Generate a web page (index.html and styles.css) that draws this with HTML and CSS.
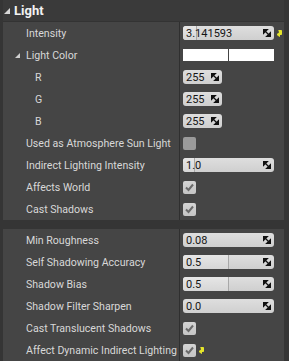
FILE: index.html
```html
<!DOCTYPE html>
<html>
<head>
<meta charset="utf-8">
<link rel="stylesheet" href="styles.css">
</head>
<body>
<div class="panel">
  <div class="header"><span class="htri"></span><span class="htitle">Light</span></div>
  <div class="section">
    <div class="row">
      <div class="label">Intensity</div>
      <div class="value">
        <div class="field wide"><div class="fill" style="width:13px"></div><span class="num">3.141593</span><svg class="spin" viewBox="0 0 8 8"><polygon points="0,0 5,0 0,5" /><polygon points="8,8 3,8 8,3" /><line x1="1" y1="1" x2="7" y2="7" /></svg></div>
        <svg class="reset" viewBox="0 0 6 8"><path d="M1.5 1.5 H4.5 V5.5 H2.5" /><polygon points="0,5.5 2.5,3.5 2.5,7.5" /></svg>
      </div>
    </div>
    <div class="row">
      <div class="label"><span class="stri"></span>Light Color</div>
      <div class="value"><div class="color"><span></span><span></span></div></div>
    </div>
    <div class="row">
      <div class="label sub">R</div>
      <div class="value"><div class="field small"><span class="num">255</span><svg class="spin" viewBox="0 0 8 8"><polygon points="0,0 5,0 0,5" /><polygon points="8,8 3,8 8,3" /><line x1="1" y1="1" x2="7" y2="7" /></svg></div></div>
    </div>
    <div class="row">
      <div class="label sub">G</div>
      <div class="value"><div class="field small"><span class="num">255</span><svg class="spin" viewBox="0 0 8 8"><polygon points="0,0 5,0 0,5" /><polygon points="8,8 3,8 8,3" /><line x1="1" y1="1" x2="7" y2="7" /></svg></div></div>
    </div>
    <div class="row">
      <div class="label sub">B</div>
      <div class="value"><div class="field small"><span class="num">255</span><svg class="spin" viewBox="0 0 8 8"><polygon points="0,0 5,0 0,5" /><polygon points="8,8 3,8 8,3" /><line x1="1" y1="1" x2="7" y2="7" /></svg></div></div>
    </div>
    <div class="row">
      <div class="label">Used as Atmosphere Sun Light</div>
      <div class="value"><div class="check off"></div></div>
    </div>
    <div class="row">
      <div class="label">Indirect Lighting Intensity</div>
      <div class="value"><div class="field wide"><div class="fill" style="width:11px"></div><span class="num">1.0</span><svg class="spin" viewBox="0 0 8 8"><polygon points="0,0 5,0 0,5" /><polygon points="8,8 3,8 8,3" /><line x1="1" y1="1" x2="7" y2="7" /></svg></div></div>
    </div>
    <div class="row">
      <div class="label">Affects World</div>
      <div class="value"><div class="check"><svg viewBox="0 0 13 13"><path d="M3 6.5 L5.5 9 L10 3.5" /></svg></div></div>
    </div>
    <div class="row">
      <div class="label">Cast Shadows</div>
      <div class="value"><div class="check"><svg viewBox="0 0 13 13"><path d="M3 6.5 L5.5 9 L10 3.5" /></svg></div></div>
    </div>
  </div>
  <div class="sep"></div>
  <div class="section">
    <div class="row">
      <div class="label">Min Roughness</div>
      <div class="value"><div class="field wide"><span class="num">0.08</span><svg class="spin" viewBox="0 0 8 8"><polygon points="0,0 5,0 0,5" /><polygon points="8,8 3,8 8,3" /><line x1="1" y1="1" x2="7" y2="7" /></svg></div></div>
    </div>
    <div class="row">
      <div class="label">Self Shadowing Accuracy</div>
      <div class="value"><div class="field wide"><div class="fill" style="width:45px"></div><span class="num">0.5</span><svg class="spin" viewBox="0 0 8 8"><polygon points="0,0 5,0 0,5" /><polygon points="8,8 3,8 8,3" /><line x1="1" y1="1" x2="7" y2="7" /></svg></div></div>
    </div>
    <div class="row">
      <div class="label">Shadow Bias</div>
      <div class="value"><div class="field wide"><div class="fill" style="width:45px"></div><span class="num">0.5</span><svg class="spin" viewBox="0 0 8 8"><polygon points="0,0 5,0 0,5" /><polygon points="8,8 3,8 8,3" /><line x1="1" y1="1" x2="7" y2="7" /></svg></div></div>
    </div>
    <div class="row">
      <div class="label">Shadow Filter Sharpen</div>
      <div class="value"><div class="field wide"><span class="num">0.0</span><svg class="spin" viewBox="0 0 8 8"><polygon points="0,0 5,0 0,5" /><polygon points="8,8 3,8 8,3" /><line x1="1" y1="1" x2="7" y2="7" /></svg></div></div>
    </div>
    <div class="row">
      <div class="label">Cast Translucent Shadows</div>
      <div class="value"><div class="check"><svg viewBox="0 0 13 13"><path d="M3 6.5 L5.5 9 L10 3.5" /></svg></div></div>
    </div>
    <div class="row">
      <div class="label">Affect Dynamic Indirect Lighting</div>
      <div class="value"><div class="check"><svg viewBox="0 0 13 13"><path d="M3 6.5 L5.5 9 L10 3.5" /></svg></div>
        <svg class="reset" viewBox="0 0 6 8"><path d="M1.5 1.5 H4.5 V5.5 H2.5" /><polygon points="0,5.5 2.5,3.5 2.5,7.5" /></svg>
      </div>
    </div>
  </div>
</div>
</body>
</html>
```

FILE: styles.css
```css
html, body {
  margin: 0;
  padding: 0;
  background: #373737;
}
.panel {
  width: 289px;
  height: 361px;
  box-sizing: border-box;
  border-left: 3px solid #353535;
  border-right: 5px solid #353535;
  background: #454545;
  font-family: Roboto, "Liberation Sans", sans-serif;
  overflow: hidden;
}
.header {
  height: 22px;
  background: #3a3a3a;
  display: flex;
  align-items: center;
  border-bottom: 1px solid #333;
  box-sizing: border-box;
}
.htri {
  width: 0;
  height: 0;
  border-left: 6px solid transparent;
  border-bottom: 6px solid #d8d8d8;
  margin-left: 1px;
  margin-right: 4px;
}
.htitle {
  color: #f2f2f2;
  font-weight: bold;
  font-size: 13px;
}
.section {
  display: flex;
  flex-direction: column;
}
.row {
  display: grid;
  grid-template-columns: 176px 1fr;
  height: 22px;
}
.label {
  color: #d8d8d8;
  font-size: 10.6px;
  display: flex;
  align-items: center;
  padding-left: 23px;
  white-space: nowrap;
  overflow: hidden;
}
.label.sub {
  padding-left: 32px;
}
.stri {
  width: 0;
  height: 0;
  border-left: 5px solid transparent;
  border-bottom: 5px solid #d0d0d0;
  margin-left: -11px;
  margin-right: 6px;
}
.value {
  border-left: 1px solid #2f2f2f;
  display: flex;
  align-items: center;
  padding-left: 3px;
  gap: 3px;
}
.field {
  position: relative;
  height: 14px;
  border-radius: 3px;
  background: linear-gradient(#dedede, #cfcfcf);
  display: flex;
  align-items: center;
  box-sizing: border-box;
  padding: 0 3px;
  overflow: hidden;
}
.field.wide { width: 91px; }
.field.small { width: 39px; }
.fill {
  position: absolute;
  left: 0;
  top: 0;
  bottom: 0;
  background: linear-gradient(#e6e6e6, #d6d6d6);
  border-right: 1px solid #a8a8a8;
}
.num {
  position: relative;
  color: #151515;
  font-size: 11px;
  flex: 1;
}
.spin {
  position: relative;
  width: 8px;
  height: 8px;
  fill: #111;
  stroke: #111;
  stroke-width: 1.2;
}
.reset {
  width: 6px;
  height: 8px;
  fill: #e5e52a;
  stroke: #e5e52a;
  stroke-width: 1;
}
.color {
  display: flex;
  gap: 1px;
  width: 91px;
  height: 12px;
  background: #444;
}
.color span {
  flex: 1;
  background: #ffffff;
}
.check {
  width: 13px;
  height: 13px;
  border-radius: 2px;
  background: linear-gradient(#d4d4d4, #c4c4c4);
  display: flex;
}
.check.off {
  background: #9a9a9a;
}
.check svg {
  width: 13px;
  height: 13px;
  fill: none;
  stroke: #6a6a6a;
  stroke-width: 2;
}
.sep {
  height: 9px;
  background: #353535;
}
```
